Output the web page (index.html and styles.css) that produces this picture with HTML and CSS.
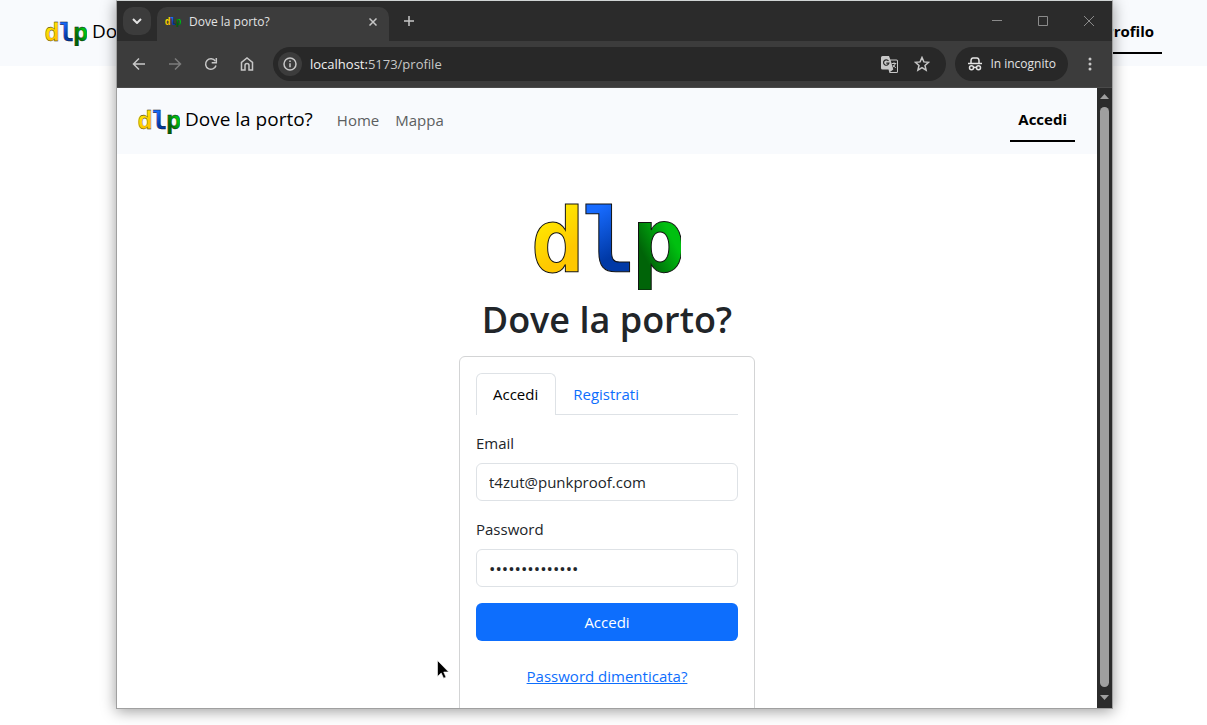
FILE: index.html
```html
<!DOCTYPE html>
<html lang="it">
<head>
<meta charset="utf-8">
<title>Dove la porto?</title>
<link rel="stylesheet" href="styles.css">
</head>
<body>
<svg class="defs" aria-hidden="true">
  <defs>
    <linearGradient id="yellow" x1="0" y1="0" x2="0.4" y2="1"><stop offset="0.3" stop-color="#ffea00"/><stop offset="0.75" stop-color="#ffc800"/></linearGradient>
    <linearGradient id="blue" x1="0" y1="0" x2="0.3" y2="1"><stop offset="0.25" stop-color="#176bff"/><stop offset="0.75" stop-color="#0039a6"/></linearGradient>
    <linearGradient id="green" x1="0.9" y1="0.2" x2="0.2" y2="0.9"><stop offset="0.3" stop-color="#00c010"/><stop offset="0.8" stop-color="#006408"/></linearGradient>
    <symbol id="logo" viewBox="0 0 148 90">
      <g class="logo-letters">
        <text x="-2" y="72" fill="url(#yellow)">d</text>
        <text x="49" y="72" fill="url(#blue)">l</text>
        <text x="99" y="72" fill="url(#green)">p</text>
      </g>
    </symbol>
  </defs>
</svg>

<header class="navbar navbar-back">
  <a class="brand" href="#"><svg class="brand-logo"><use href="#logo"/></svg>Dove la porto?</a>
  <a class="nav-active" href="#">Profilo</a>
</header>

<div class="window">
  <div class="tabstrip">
    <button class="tab-search" aria-label="Cerca schede"><svg width="10" height="6" viewBox="0 0 10 6"><path d="M1 1l4 4 4-4" class="line bold"/></svg></button>
    <div class="tab">
      <svg class="favicon"><use href="#logo"/></svg>
      <span class="tab-title">Dove la porto?</span>
      <button class="plain" aria-label="Chiudi scheda"><svg width="8" height="8" viewBox="0 0 8 8"><path d="M.5.5l7 7M7.500.5l-7 7" class="line"/></svg></button>
    </div>
    <button class="plain new-tab" aria-label="Nuova scheda"><svg width="10" height="10" viewBox="0 0 10 10"><path d="M5 0v10M0 5h10" class="line"/></svg></button>
    <div class="controls">
      <button class="plain" aria-label="Riduci"><svg width="10" height="10" viewBox="0 0 10 10"><path d="M0 4.500h10" class="thin"/></svg></button>
      <button class="plain" aria-label="Ingrandisci"><svg width="10" height="10" viewBox="0 0 10 10"><path d="M.5.5h9v9h-9z" class="thin"/></svg></button>
      <button class="plain" aria-label="Chiudi"><svg width="10" height="10" viewBox="0 0 10 10"><path d="M0 0l10 10M10 0L0 10" class="thin"/></svg></button>
    </div>
  </div>

  <div class="toolbar">
    <div class="nav-buttons">
      <button class="plain" aria-label="Indietro"><svg width="16" height="16" viewBox="0 0 16 16"><path d="M14 8H3M8 2.500L2.500 8 8 13.500" class="line"/></svg></button>
      <button class="plain dim" aria-label="Avanti"><svg width="16" height="16" viewBox="0 0 16 16"><path d="M2 8h11M8 2.500L13.500 8 8 13.500" class="line"/></svg></button>
      <button class="plain" aria-label="Ricarica"><svg width="16" height="16" viewBox="0 0 16 16"><path d="M13 9.500A5.300 5.300 0 1 1 12.300 5" class="line"/><path d="M13.300 2v4.700H8.700" class="line"/></svg></button>
      <button class="plain" aria-label="Home"><svg width="16" height="16" viewBox="0 0 16 16"><path d="M2.500 14V6.300L8 2l5.500 4.300V14H10V9.500a2 2 0 0 0-4 0V14z" class="line"/></svg></button>
    </div>
    <div class="omnibox">
      <button class="plain site-info" aria-label="Informazioni sul sito"><svg width="14" height="14" viewBox="0 0 14 14"><circle cx="7" cy="7" r="6" class="line"/><path d="M7 6.200v4M7 3.500v1.500" class="line"/></svg></button>
      <span class="url"><span class="host">localhost:</span>5173/profile</span>
      <button class="plain" aria-label="Traduci"><svg width="17" height="17" viewBox="0 0 17 17"><path d="M1.500 0H8l1.300 3.500H15.500A1.500 1.500 0 0 1 17 5v10.500a1.500 1.500 0 0 1-1.500 1.500H8.500l-1-3.500h-6A1.500 1.500 0 0 1 0 12V1.500A1.500 1.500 0 0 1 1.500 0z" fill="#c7c7c7"/><path d="M9.700 4.500h5.800q.5 0 .5.500v10.500q0 .5-.5.500H9l3.300-2.500z" fill="#282828"/><path d="M7.500 5A2.700 2.700 0 1 0 7.900 7.200H5.300" fill="none" stroke="#282828" stroke-width="1.200"/><path d="M10.700 7.500h4.600M13 6.300v1.200M14.300 7.500q-.7 2.500-2.600 4M11.800 9l3 3" fill="none" stroke="#c7c7c7"/></svg></button>
      <button class="plain star" aria-label="Preferiti"><svg width="16" height="16" viewBox="0 0 16 16"><path d="M8 1.500l1.900 4.400 4.700.4-3.600 3.100 1.100 4.700L8 11.600l-4.100 2.500L5 9.400 1.400 6.300l4.700-.4z" class="line"/></svg></button>
    </div>
    <button class="incognito"><svg width="16" height="16" viewBox="0 0 16 16"><path d="M1 7.500h14" class="line"/><path d="M4 7V4.500Q4.300 2 6 2h4q1.700 0 2 2.500V7" class="line"/><circle cx="4.500" cy="11.700" r="2" class="line"/><circle cx="11.500" cy="11.700" r="2" class="line"/><path d="M6.500 11.400h3" class="line"/></svg>In incognito</button>
    <button class="plain menu" aria-label="Menu"><svg width="4" height="14" viewBox="0 0 4 14"><g fill="#c7c7c7"><circle cx="2" cy="2" r="1.500"/><circle cx="2" cy="7" r="1.500"/><circle cx="2" cy="12" r="1.500"/></g></svg></button>
  </div>

  <div class="viewport">
    <div class="page">
      <header class="navbar">
        <a class="brand" href="#"><svg class="brand-logo"><use href="#logo"/></svg>Dove la porto?</a>
        <nav class="links"><a href="#">Home</a><a href="#">Mappa</a></nav>
        <a class="nav-active" href="#">Accedi</a>
      </header>
      <main class="login">
        <svg class="hero-logo"><use href="#logo"/></svg>
        <h1>Dove la porto?</h1>
        <form class="card">
          <div class="form-tabs">
            <button type="button" class="form-tab selected">Accedi</button>
            <button type="button" class="form-tab">Registrati</button>
          </div>
          <label for="email">Email</label>
          <input id="email" type="email" value="t4zut@punkproof.com">
          <label for="password">Password</label>
          <input id="password" type="password" value="abcdefghijklmn">
          <button type="button" class="submit">Accedi</button>
          <a class="forgot" href="#">Password dimenticata?</a>
        </form>
      </main>
    </div>
    <div class="scrollbar">
      <svg width="9" height="5" viewBox="0 0 9 5"><path d="M0 5L4.500 0 9 5z"/></svg>
      <div class="thumb"></div>
      <svg width="9" height="5" viewBox="0 0 9 5"><path d="M0 0h9L4.500 5z"/></svg>
    </div>
  </div>
</div>

<svg class="cursor" width="12" height="19" viewBox="0 0 12 19"><path d="M.5.5v16l3.700-3.500 2.400 5.200 2.400-1-2.300-5.200h5z" fill="#000" stroke="#fff" stroke-width=".6"/></svg>
</body>
</html>
```
FILE: styles.css
```css
* { box-sizing: border-box; }

body {
  margin: 0;
  height: 100vh;
  overflow: hidden;
  background: #fff;
  color: #212529;
  font-family: "Open Sans", "Noto Sans", sans-serif;
  font-size: 15px;
  line-height: 24px;
}

button, input { font: inherit; color: inherit; }
a { text-decoration: none; }
svg { display: block; flex: none; }

.defs { position: absolute; width: 0; height: 0; }
.line { fill: none; stroke: currentColor; stroke-width: 1.5; }
.bold { stroke-width: 2; }
.thin { fill: none; stroke: #8b8b8b; stroke-width: 1; }

.logo-letters {
  font-family: "DejaVu Sans Mono", monospace;
  font-weight: bold;
  font-size: 89px;
  stroke: #111;
  stroke-width: 1;
}

/* Site header */
.navbar {
  display: flex;
  align-items: center;
  height: 66px;
  padding: 0 22px 2px 21px;
  background: #f8fafd;
}
.navbar-back { padding: 0 45px 2px 45px; }
.brand {
  display: flex;
  align-items: center;
  gap: 5px;
  padding-bottom: 2px;
  color: #000;
  font-size: 19px;
}
.brand-logo { width: 42px; height: 26px; margin-top: 4px; }
.brand-logo .logo-letters { stroke-width: 3; }
.links { display: flex; gap: 16px; margin-left: 24px; }
.links a { color: #5c5e60; }
.nav-active {
  margin-left: auto;
  padding: 8px;
  border-bottom: 2px solid #000;
  color: #000;
  font-weight: 700;
  line-height: 26px;
}

/* Browser window */
.window {
  position: absolute;
  inset: 0 94px 16px 116px;
  display: flex;
  flex-direction: column;
  border: 1px solid #a0a0a0;
  border-top-color: #d0d4d4;
  background: #3c3c3c;
  box-shadow: 0 2px 14px rgba(0, 0, 0, 0.4);
}

.plain {
  display: grid;
  place-items: center;
  padding: 0;
  border: 0;
  background: none;
  color: #c7c7c7;
}
.dim { color: #7c7c7c; }

.tabstrip {
  display: flex;
  flex: none;
  height: 40px;
  padding-left: 6px;
  background: #2b2b2b;
  color: #e3e3e3;
  font-size: 12px;
}
.tab-search {
  display: grid;
  place-items: center;
  width: 28px;
  height: 28px;
  margin: 6px 6px 0 0;
  border: 0;
  border-radius: 10px;
  background: #3c3c3c;
}
.tab {
  display: flex;
  align-items: center;
  width: 232px;
  margin-top: 6px;
  padding: 0 12px 5px 8px;
  border-radius: 10px 10px 0 0;
  background: #3c3c3c;
}
.favicon { width: 16px; height: 10px; margin-right: 8px; }
.tab-title { flex: 1; }
.new-tab { width: 40px; }
.controls {
  display: flex;
  gap: 36px;
  margin-left: auto;
  padding-right: 18px;
}

.toolbar {
  display: flex;
  align-items: center;
  flex: none;
  height: 47px;
  padding: 0 20px 0 14px;
  border-bottom: 1px solid #4a4a4a;
  color: #e3e3e3;
}
.nav-buttons { display: flex; gap: 20px; margin-right: 18px; }
.omnibox {
  display: flex;
  align-items: center;
  flex: 1;
  height: 34px;
  padding: 0 16px 0 5px;
  border-radius: 17px;
  background: #282828;
  font-size: 13px;
}
.site-info {
  width: 24px;
  height: 24px;
  border-radius: 50%;
  background: #3c3c3c;
}
.url { flex: 1; margin-left: 8px; color: #c7c7c7; }
.host { color: #f1f1f1; }
.star { margin-left: 16px; }
.incognito {
  display: flex;
  align-items: center;
  gap: 7px;
  height: 34px;
  margin: 0 20px 0 9px;
  padding: 0 12px;
  border: 0;
  border-radius: 17px;
  background: #282828;
  font-size: 12px;
}

.viewport { display: flex; flex: 1; min-height: 0; background: #fff; }
.page { flex: 1; overflow: hidden; }
.scrollbar {
  display: flex;
  flex-direction: column;
  align-items: center;
  gap: 8px;
  width: 15px;
  padding: 6px 0 8px;
  background: #2b2b2b;
}
.scrollbar svg { fill: #9f9f9f; }
.thumb { flex: 1; width: 9px; border-radius: 5px; background: #9f9f9f; }

/* Login */
.login {
  display: flex;
  flex-direction: column;
  align-items: center;
  padding-top: 46px;
}
.hero-logo { width: 148px; height: 90px; }
h1 {
  margin: 6px 0 12px;
  font-size: 36px;
  font-weight: 600;
  line-height: 48px;
}
.card {
  display: flex;
  flex-direction: column;
  width: 296px;
  padding: 16px 16px 32px;
  border: 1px solid #d3d4d5;
  border-radius: 6px;
}
.form-tabs {
  display: flex;
  margin-bottom: 16px;
  border-bottom: 1px solid #dee2e6;
}
.form-tab {
  height: 42px;
  margin-bottom: -1px;
  padding: 0 16px 2px;
  border: 1px solid transparent;
  border-bottom: 0;
  border-radius: 6px 6px 0 0;
  background: none;
  color: #0d6efd;
}
.selected { padding: 0 17px 2px 16px; border-color: #dee2e6; background: #fff; color: #000; }
.card label { margin-bottom: 8px; }
.card input {
  width: 100%;
  height: 38px;
  margin-bottom: 16px;
  padding: 0 12px;
  border: 1px solid #dee2e6;
  border-radius: 6px;
  background: #fff;
}
.card input[type="password"] { font-size: 17px; }
.submit {
  height: 38px;
  border: 0;
  border-radius: 6px;
  background: #0d6efd;
  color: #fff;
}
.forgot {
  margin-top: 23px;
  color: #0d6efd;
  text-align: center;
  text-decoration: underline;
}

.cursor { position: absolute; left: 437px; top: 660px; }
```
